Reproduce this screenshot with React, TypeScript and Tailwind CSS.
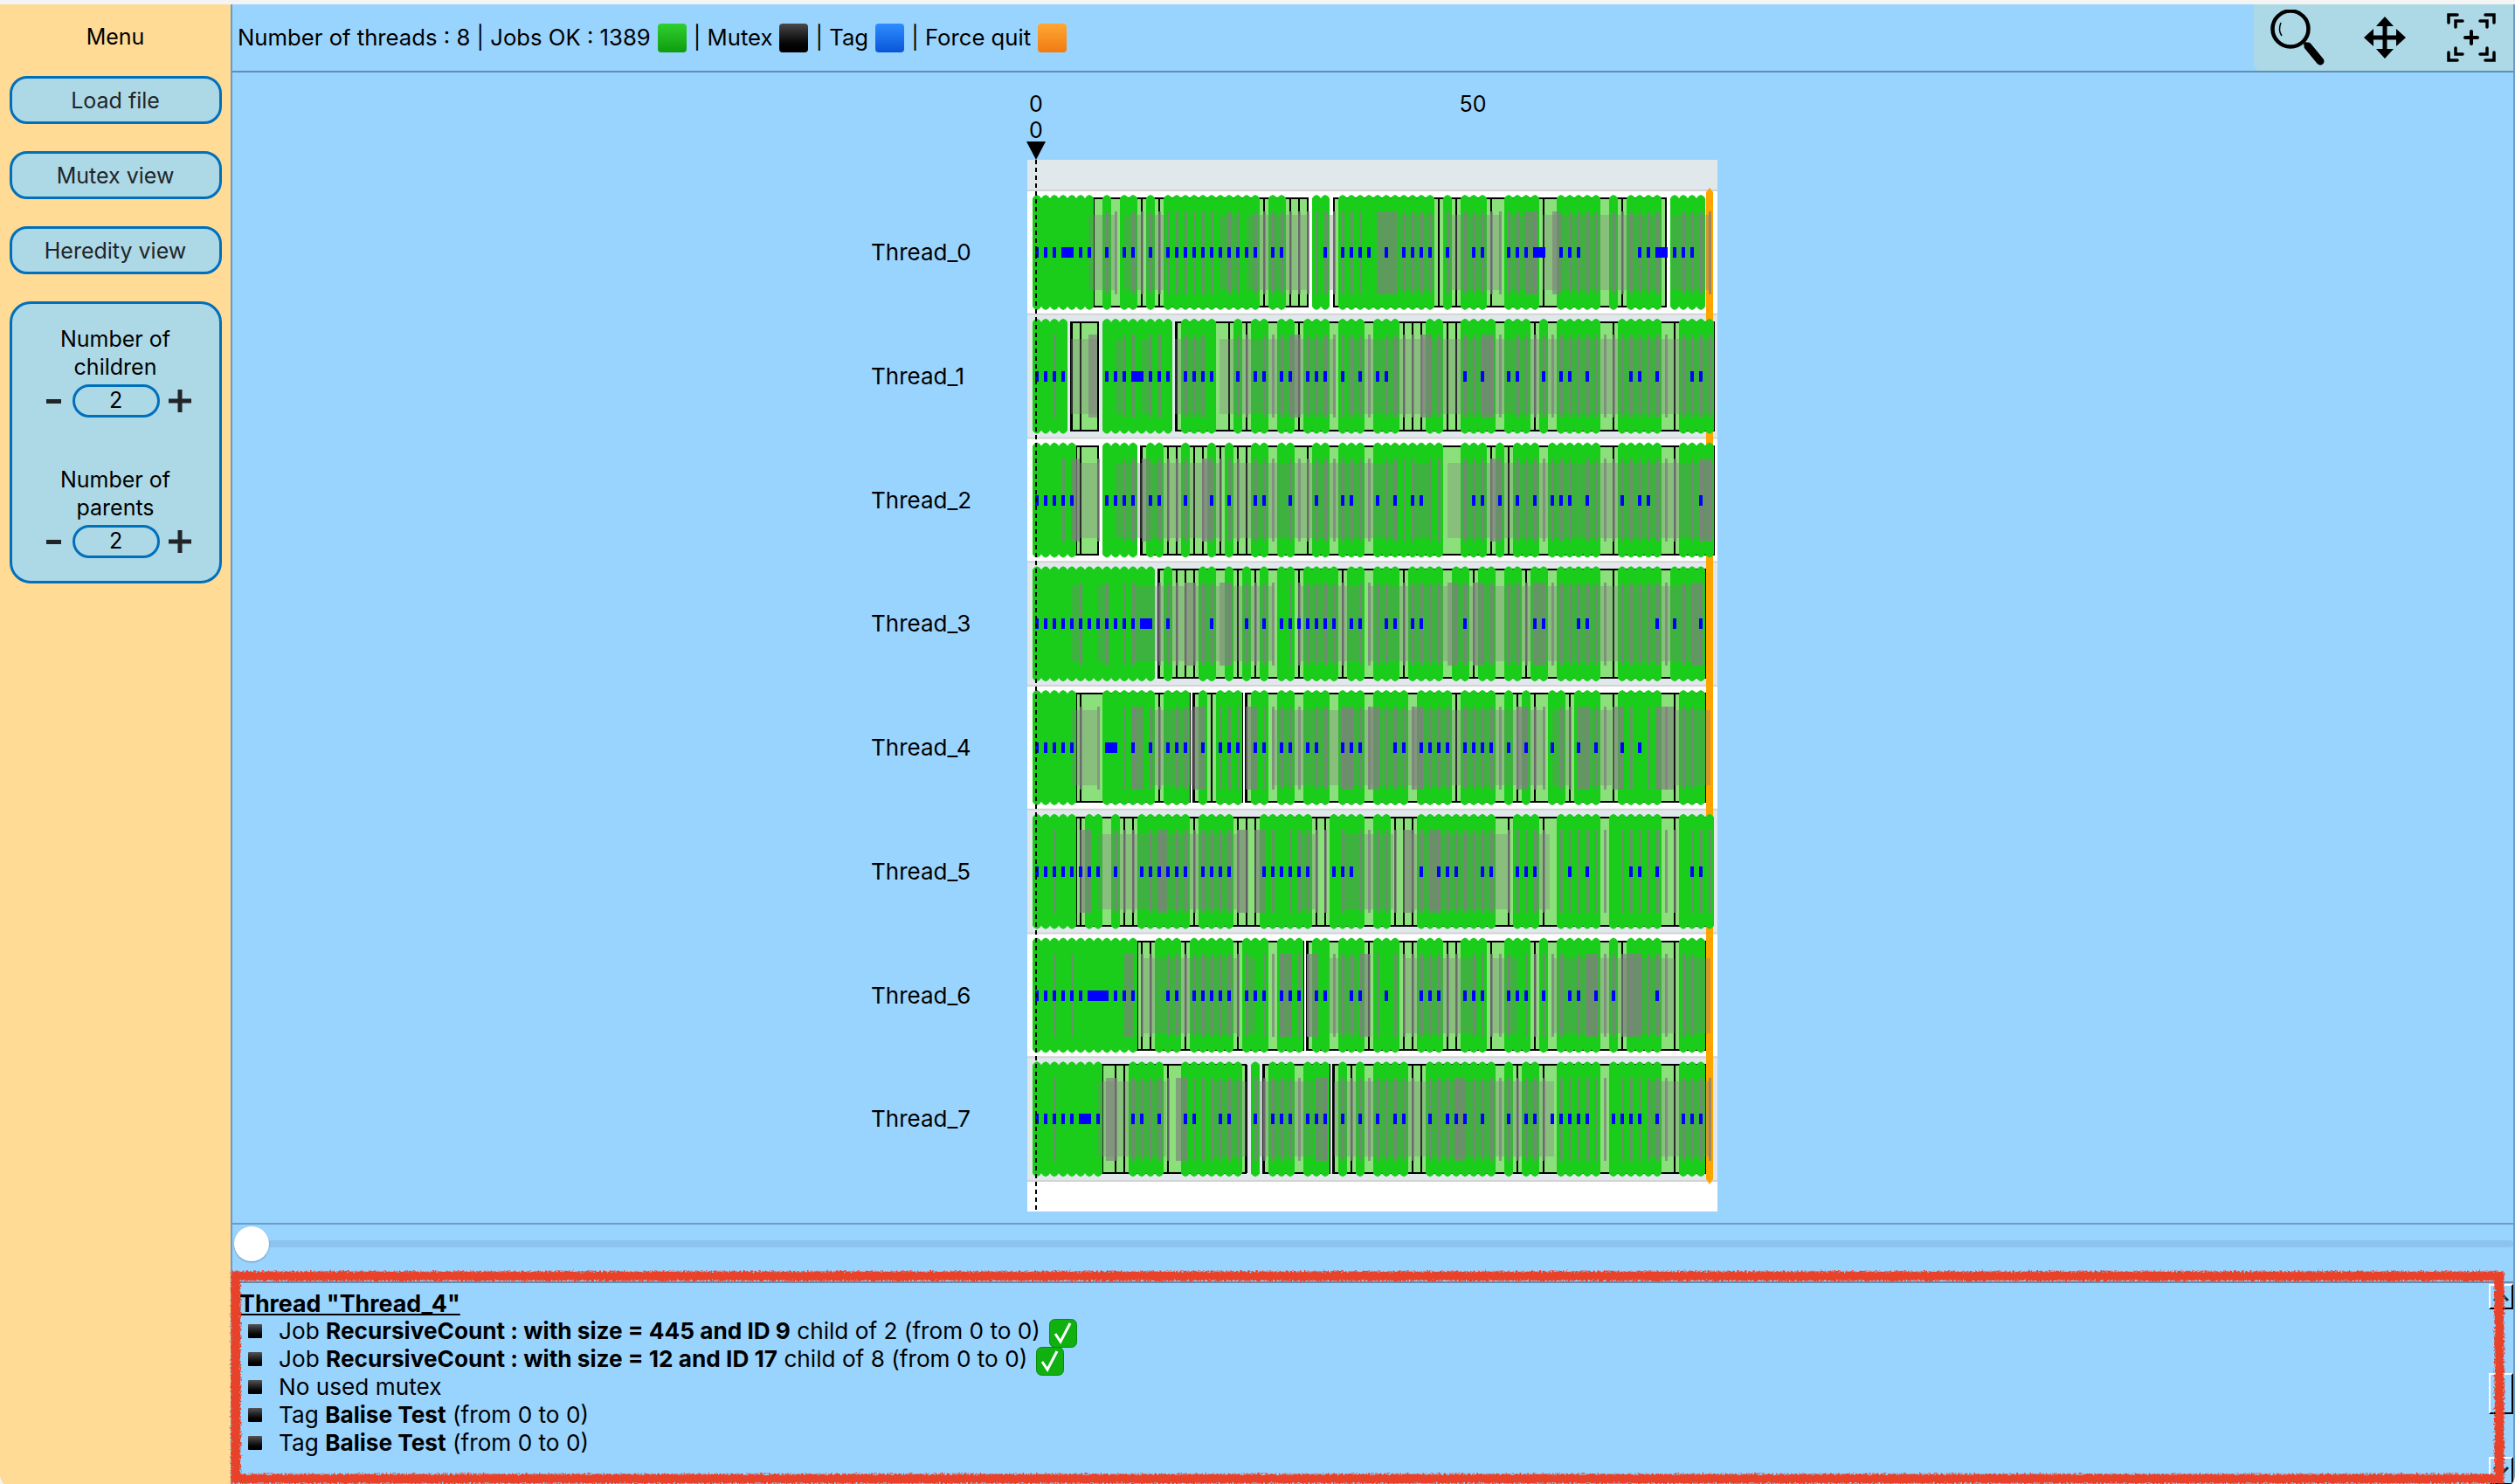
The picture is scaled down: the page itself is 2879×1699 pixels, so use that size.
import React from "react";

type Range = [number, number];

const PITCH = 141.75;
const X0 = 1182;

// r = ranges of cells, "1-3 5" -> [1,2,3,5]
const cells = (s: string) =>
  s.split(" ").flatMap((p) => {
    const [a, b] = p.split("-").map(Number);
    if (b === undefined) return [a];
    const out: number[] = [];
    for (let i = a; i <= b; i++) out.push(i);
    return out;
  });
const pairs = (s: string): Range[] =>
  s.split(" ").map((p) => {
    const [a, b] = p.split("-").map(Number);
    return [a, b] as Range;
  });

const rows = [
  {
    green: "0-7 8-9 10-12 13-14 15-26 27-29 32-34 35-46 47-48 49-52 54-58 60-65 66-67 68-72 73-77",
    box: "7-31.45 34.45-72.45",
    lines: "12 14 26 29 30 31 34 46 48 52 58 67 72",
    dots: "0-2 5 6 8 10 11 13 15-25 27 28 33 35-38 40 42-45 47 50 51 54-56 60-62 69 70 73-75",
    big: [[3, 2], [57, 2], [71, 2]],
    bars: "8 9 11-20 22 23 25-37 42-45 47 49-57 61-64 66-71 74-77",
    bands: "145-206 225-265 275-320 440-480 500-640 680-700 840-920 950-1070 1085-1125 1165-1430 1455-1540",
    tall: "792-838 1125-1152 1185-1208",
  },
  {
    green: "0-4 8-16 17-21 23-24 25-27 28-30 31-34 35-38 39-42 45-47 49-53 54-57 58-59 60-65 67-72 74-78",
    box: "4.4-7.45 16.4-78",
    lines: "4 5 7 16 22 24 30 42 43 44 47 48 57 66 73",
    dots: "0-3 8-10 13-15 17-20 23 25 26 28 29 31-33 35 37 39 40 49 51 54 55 58 60 61 63 68 69 71 75 76",
    big: [[11, 2]],
    bars: "2 10 11 13 14 17-19 23 24 26-38 40-46 49-53 55-72 74-77",
    bands: "106-165 205-225 264-284 340-400 440-700 725-1548",
    tall: "145-165 596-616 890-915 1028-1052",
  },
  {
    green: "0-5 8-12 13-15 17-18 20-21 22-23 25-27 28-30 32-34 35-38 39-47 49-52 53-54 55-58 59-65 67-72 74-78",
    box: "5-7.45 12.4-78",
    lines: "5 7 12 15 16 18 19 21 23 24 31 52 54 66 73",
    dots: "0-4 8-11 13 14 17 20 22 25 26 29 32 35 36 39 41 43 44 50 51 53 55 57 59-61 63 67 69 70 76",
    big: [] as number[][],
    bars: "3 7 10 11 14-17 19-23 25-27 29-38 40-43 45 46 49-53 55-61 63-73 75-77",
    bands: "106-168 205-264 284-440 460-838 870-910 950-1548",
    tall: "106-125 264-284 400-420 1048-1070 1518-1545",
  },
  {
    green: "0-14 15-16 19-21 22-23 24-25 26-27 28-30 31-35 36-38 39-42 43-47 48-50 51-53 54-56 57-59 60-65 67-72 73-77",
    box: "14.4-77",
    lines: "14 16 17 18 23 25 30 35 42 50 56 66",
    dots: "0-11 15 20 24 26 28-34 36 37 40 41 43 44 49 57 58 62 63 71 73 76",
    big: [[12, 2]],
    bars: "5 8 10 11 14-20 22 24-27 29-35 37-40 42-46 48-52 54-65 67-72 74-76",
    bands: "106-128 165-190 245-360 380-440 460-560 617-760 773-950 970-1007 1030-1145 1165-1500",
    tall: "362-380 440-465 950-972 1007-1032 1146-1165 1498-1522",
  },
  {
    green: "0-5 8-14 15-18 19-20 21-24 25-27 28-30 31-34 35-38 39-43 44-48 49-53 54-55 56-57 59-61 62-65 67-72 74-77",
    box: "5-18 18.4-24 24.4-77",
    lines: "5 14 18 20 24 48 55 57 61 66 73",
    dots: "0-4 11 13 15-17 19 21-23 25 26 28 29 31 32 35-37 41 42 44-47 49-52 54 56 59 62 64 67 69",
    big: [[8, 2]],
    bars: "5 7 10 11 13 14 16 17 19 21-23 25-30 32 33 35-47 49-53 55-58 60-65 67 68 70-72 74 75",
    bands: "106-165 282-380 557-1170 1185-1225 1265-1320 1460-1540",
    tall: "243-268 380-405 498-522 714-738 773-796 870-895 1105-1130 1245-1267 1321-1345 1420-1458",
  },
  {
    green: "0-5 6-8 9-10 12-18 19-23 26-32 34-38 39-41 44-53 55-58 60-65 66-72 74-78",
    box: "5-77.5",
    lines: "5 10 11 18 23 24 25 32 33 41 42 43 54 58 66 73",
    dots: "0-7 9 12-17 19-22 26-31 34-36 44 46-48 51 52 55-57 61 63 68 69 71 75 76",
    big: [] as number[][],
    bars: "2 6 9-11 13 14 16-24 27 29-33 35 37-41 43-52 54-58 60-65 67-73 75-77",
    bands: "165-480 618-660 715-830 870-1090 1145-1180",
    tall: "125-147 302-322 478-498 518-542 850-870 910-935",
  },
  {
    green: "0-12 14-17 18-23 24-27 28-31 32-34 35-38 39-42 44-47 49-52 54-57 58-59 60-65 66-67 68-72 74-77",
    box: "12-31 31.4-77",
    lines: "12 13 17 23 31 38 42 43 47 48 52 57 67 73",
    dots: "0-5 9-11 15 16 18-22 24-26 28-30 32 33 36 37 40 44-46 49-51 54-56 58 61 62 64 66 71",
    big: [[6, 3]],
    bars: "2 4 12 13 15-24 26-32 34-39 41-48 50-54 56-60 62-66 68-72 74 75",
    bands: "264-480 500-520 685-750 850-1020 1048-1110 1185-1460 1480-1540",
    tall: "225-245 574-600 635-658 755-772 1262-1287 1340-1385",
  },
  {
    green: "0-8 11-15 17-24 25-26 27-30 31-34 35-36 37-38 39-43 45-53 54-55 56-58 60-65 66-72 74-77",
    box: "8-24.4 26.4-34 34.4-77",
    lines: "9 10 15 24 26 34 36 43 44 55 58 73",
    dots: "0-4 7 11 12 14 17 18 21 22 25 27-29 31-33 35 37 39 41 42 45 47-49 51 54 56 57 59-63 66-69 71 74-76",
    big: [[5, 2]],
    bars: "2 9 11-15 17-23 25-30 32 33 35-43 45-48 50-58 60-65 67-72 74-77",
    bands: "165-320 420-500 520-650 695-1190 1400-1540",
    tall: "184-204 342-362 656-680 967-992",
  },
];

// job block with the little bumps along top and bottom
const jobPath = (a: number, b: number, cy: number) => {
  const x0 = X0 + a * 10;
  const n = b - a;
  const top = cy - 66;
  const bot = cy + 66;
  let d = `M${x0} ${top + 4}`;
  for (let i = 0; i < n; i++) {
    const x = x0 + i * 10;
    d += `L${x + 2} ${top + 1.5}L${x + 5} ${top}L${x + 8} ${top + 1.5}L${x + 10} ${top + 4}`;
  }
  d += `V${bot - 4}`;
  for (let i = n - 1; i >= 0; i--) {
    const x = x0 + i * 10;
    d += `L${x + 8} ${bot - 1.5}L${x + 5} ${bot}L${x + 2} ${bot - 1.5}L${x} ${bot - 4}`;
  }
  return d + "Z";
};

const uX = (u: number) => 1172 + u / 1.96;

const Chart = () => {
  return (
    <svg width="980" height="1290" viewBox="990 100 980 1290" className="block">
      <rect x="1176" y="183" width="790" height="1204" fill="#ffffff" />
      <rect x="1176" y="183" width="790" height="35" fill="#e1e8ec" />
      {rows.map((_, i) => (
        <g key={i}>
          {i % 2 === 1 && <rect x="1176" y={218 + i * PITCH} width="790" height={PITCH} fill="#e1e8ec" />}
          <rect x="1176" y={217 + i * PITCH} width="790" height="2" fill="#d3d3d3" />
        </g>
      ))}
      <rect x="1176" y={217 + 8 * PITCH} width="790" height="2" fill="#d3d3d3" />

      {rows.map((r, i) => {
        const cy = 289 + i * PITCH;
        return (
          <g key={i} shapeRendering="crispEdges">
            {pairs(r.box).map(([a, b], k) => (
              <rect key={k} x={X0 + a * 10} y={cy - 62} width={(b - a) * 10} height="124" fill="#8ce07c" stroke="#000000" strokeWidth="2" />
            ))}
            {cells(r.lines).map((c) => (
              <rect key={c} x={X0 + c * 10 + 3.5} y={cy - 62} width="2" height="124" fill="#000000" />
            ))}
          </g>
        );
      })}

      <path d="M1953 220L1957 215L1961 220V1350L1957 1356L1953 1350Z" fill="#ffa500" />

      {rows.map((r, i) => {
        const cy = 289 + i * PITCH;
        return (
          <g key={i}>
            {pairs(r.green).map(([a, b]) => (
              <path key={a} d={jobPath(a, b, cy)} fill="#1bcd1b" />
            ))}
            <g shapeRendering="crispEdges">
              {pairs(r.bands).map(([a, b]) => (
                <rect key={a} x={uX(a)} y={cy - 43} width={(b - a) / 1.96} height="86" fill="#808080" fillOpacity="0.35" />
              ))}
              {pairs(r.tall).map(([a, b]) => (
                <rect key={a} x={uX(a)} y={cy - 47.5} width={(b - a) / 1.96} height="95" fill="#808080" fillOpacity="0.65" />
              ))}
              {cells(r.bars).map((c) => (
                <rect key={c} x={X0 + c * 10 + 4} y={cy - 47.5} width="3" height="95" fill="#808080" fillOpacity="0.75" />
              ))}
              {cells(r.dots).map((c) => (
                <rect key={c} x={X0 + c * 10 + 3} y={cy - 6} width="4" height="12" fill="#0000ff" />
              ))}
              {r.big.map(([c, n]) => (
                <rect key={c} x={X0 + c * 10 + 3} y={cy - 6} width={4 + (n - 1) * 10} height="12" fill="#0000ff" />
              ))}
            </g>
            <text x="997" y={cy + 9} className="text-[26px] fill-black">
              Thread_{i}
            </text>
          </g>
        );
      })}

      <text x="1186" y="128" textAnchor="middle" className="text-[25px] fill-black">0</text>
      <text x="1186" y="158" textAnchor="middle" className="text-[25px] fill-black">0</text>
      <text x="1686" y="128" textAnchor="middle" className="text-[25px] fill-black">50</text>
      <path d="M1175 162H1197L1186 183Z" fill="#000000" />
      <line x1="1186" y1="183" x2="1186" y2="1387" stroke="#000000" strokeWidth="2" strokeDasharray="5 4" />
    </svg>
  );
};

const SquareIcon = ({ className }: { className: string }) => (
  <span className={`inline-block w-[33px] h-[33px] rounded-[4px] mx-[8px] ${className}`} />
);

const MenuButton = ({ label }: { label: string }) => (
  <button className="h-[55px] w-[243px] rounded-[20px] border-[3px] border-[#0070bb] bg-[#add8e6] pt-[2px] text-[25px] text-[#212529]">
    {label}
  </button>
);

const Counter = ({ title, sub }: { title: string; sub: string }) => (
  <div className="flex flex-col items-center">
    <div className="text-[25px] leading-[32px] text-center text-black">
      {title}
      <br />
      {sub}
    </div>
    <div className="flex items-center mt-[4px] h-[38px] w-full">
      <span className="ml-[39px] w-[17px] h-[5px] bg-[#212529]" />
      <span className="ml-[13px] w-[100px] h-[38px] rounded-full border-[3px] border-[#0070bb] flex items-center justify-center text-[25px] text-black">
        2
      </span>
      <svg width="26" height="26" viewBox="0 0 26 26" className="ml-[10px]">
        <path d="M13 0V26M0 13H26" stroke="#212529" strokeWidth="5" />
      </svg>
    </div>
  </div>
);

const Check = () => (
  <svg width="32" height="33" viewBox="0 0 32 33" className="ml-[10px] inline-block align-middle">
    <rect x="0.5" y="0.5" width="31" height="32" rx="6" fill="#10b010" stroke="#0a8a0a" />
    <path d="M7 17L13 26L24 5" fill="none" stroke="#ffffff" strokeWidth="3" />
  </svg>
);

const Bullet = () => (
  <span className="inline-block w-[16px] h-[16px] mr-[19px] ml-[10px] rounded-[1px] bg-linear-to-b from-[#555555] to-[#000000]" />
);

const InfoLine = ({ children }: { children: React.ReactNode }) => (
  <div className="flex items-center h-[32px] text-[26.2px] text-black whitespace-pre">
    <Bullet />
    <span>{children}</span>
  </div>
);

const ScrollBox = ({ className, children }: { className: string; children?: React.ReactNode }) => (
  <div className={`absolute right-0 w-[28px] border-t-2 border-l-2 border-t-white border-l-white border-r-2 border-b-2 border-r-black border-b-black flex items-center justify-center ${className}`}>
    {children}
  </div>
);

export default function App() {
  return (
    <div className="w-[2879px] h-[1699px] bg-[#f4f4f4] font-[Inter,sans-serif] overflow-hidden">
      <div className="relative flex w-full h-full mt-[5px] rounded-b-[16px] overflow-hidden pb-[5px]">
        {/* menu */}
        <aside className="w-[264px] shrink-0 bg-[#ffdb96] flex flex-col items-center">
          <div className="h-[82px] flex items-center text-[25px] text-black pb-[6px]">Menu</div>
          <div className="flex flex-col gap-[31px] items-center">
            <MenuButton label="Load file" />
            <MenuButton label="Mutex view" />
            <MenuButton label="Heredity view" />
            <div className="w-[243px] h-[323px] rounded-[24px] border-[3px] border-[#0070bb] bg-[#add8e6] pt-[24px] flex flex-col gap-[55px]">
              <Counter title="Number of" sub="children" />
              <Counter title="Number of" sub="parents" />
            </div>
          </div>
        </aside>

        <main className="flex-1 flex flex-col bg-[#99d4ff] border-l-2 border-r-2 border-[#6c9cc6]">
          {/* header */}
          <header className="h-[78px] shrink-0 flex items-center border-b-2 border-[#5f8fb5] pl-[6px] text-[25.7px] text-black">
            <span>Number of threads : 8 | Jobs OK : 1389</span>
            <SquareIcon className="bg-linear-to-b from-[#2fd02f] to-[#0c9c0c]" />
            <span>| Mutex</span>
            <SquareIcon className="bg-linear-to-b from-[#4a4a4a] to-[#000000]" />
            <span>| Tag</span>
            <SquareIcon className="bg-linear-to-b from-[#2f8cff] to-[#0a55d8]" />
            <span>| Force quit</span>
            <SquareIcon className="bg-linear-to-b from-[#ffa733] to-[#f07a10]" />
            <div className="ml-auto w-[297px] h-full bg-[#add8e6] rounded-bl-[8px] flex">
              <div className="w-[100px] flex items-center justify-center">
                <svg width="64" height="64" viewBox="0 0 64 64">
                  <circle cx="24" cy="22" r="20.5" fill="none" stroke="#000000" strokeWidth="4.5" />
                  <path d="M13 15C11 20 11 26 14 30" fill="none" stroke="#000000" strokeWidth="1.5" />
                  <path d="M40 38L44 42" stroke="#000000" strokeWidth="4" />
                  <path d="M44 42L58 59" stroke="#000000" strokeWidth="9" strokeLinecap="round" />
                </svg>
              </div>
              <div className="w-[100px] flex items-center justify-center">
                <svg width="48" height="48" viewBox="0 0 48 48">
                  <path d="M24 4V44M4 24H44" stroke="#000000" strokeWidth="5" />
                  <path d="M24 0L34 11H14ZM24 48L34 37H14ZM0 24L11 14V34ZM48 24L37 14V34Z" fill="#000000" />
                </svg>
              </div>
              <div className="w-[97px] flex items-center justify-center">
                <svg width="56" height="56" viewBox="0 0 56 56">
                  <g fill="none" stroke="#000000" strokeWidth="3.5" strokeLinecap="round">
                    <path d="M2 11V2H12M10 16V9H18" />
                    <path d="M54 11V2H44M46 16V9H38" />
                    <path d="M2 45V54H12M10 40V47H18" />
                    <path d="M54 45V54H44M46 40V47H38" />
                    <path d="M21 28H35M28 21V35" strokeWidth="4" />
                  </g>
                </svg>
              </div>
            </div>
          </header>

          {/* chart */}
          <section className="h-[1319px] shrink-0 border-b-2 border-[#6c9cc6] pl-[724px] pt-[17px]">
            <Chart />
          </section>

          {/* slider */}
          <div className="relative h-[65px] shrink-0 flex items-center">
            <div className="w-full h-[8px] rounded-full bg-[#8bc4ef] ml-[2px] -mt-[21px]" />
            <div className="absolute left-[2px] top-[2px] w-[40px] h-[40px] rounded-full bg-white shadow-[0_1px_2px_rgba(0,0,0,0.3)]" />
          </div>

          {/* info */}
          <section className="relative flex-1 border-t-2 border-[#5f8fb5] pl-[8px] pt-[7px]">
            <div className="h-[32px] text-[26.8px] font-bold underline text-black flex items-center">
              Thread "Thread_4"
            </div>
            <InfoLine>
              Job <b>RecursiveCount : with size = 445 and ID 9</b> child of 2 (from 0 to 0)
              <Check />
            </InfoLine>
            <InfoLine>
              Job <b>RecursiveCount : with size = 12 and ID 17</b> child of 8 (from 0 to 0)
              <Check />
            </InfoLine>
            <InfoLine>No used mutex</InfoLine>
            <InfoLine>
              Tag <b>Balise Test</b> (from 0 to 0)
            </InfoLine>
            <InfoLine>
              Tag <b>Balise Test</b> (from 0 to 0)
            </InfoLine>

            <ScrollBox className="top-[1px] h-[29px]">
              <svg width="20" height="12" viewBox="0 0 20 12">
                <path d="M2 10L10 2L18 10" fill="none" stroke="#212529" strokeWidth="3" />
              </svg>
            </ScrollBox>
            <ScrollBox className="top-[103px] h-[47px]" />
            <ScrollBox className="top-[199px] h-[32px]">
              <svg width="20" height="12" viewBox="0 0 20 12">
                <path d="M2 2L10 10L18 2" fill="none" stroke="#212529" strokeWidth="3" />
              </svg>
            </ScrollBox>
          </section>
        </main>

        {/* hand drawn red frame over the info panel */}
        <svg className="absolute left-[262px] top-[1445px]" width="2612" height="254" viewBox="0 0 2612 254">
          <defs>
            <filter id="rough" x="-2%" y="-10%" width="104%" height="120%">
              <feTurbulence type="fractalNoise" baseFrequency="0.45" numOctaves="2" seed="4" />
              <feDisplacementMap in="SourceGraphic" scale="6" />
            </filter>
          </defs>
          <rect x="8" y="11" width="2591" height="232" fill="none" stroke="#e8432a" strokeWidth="11" filter="url(#rough)" />
        </svg>
      </div>
    </div>
  );
}
